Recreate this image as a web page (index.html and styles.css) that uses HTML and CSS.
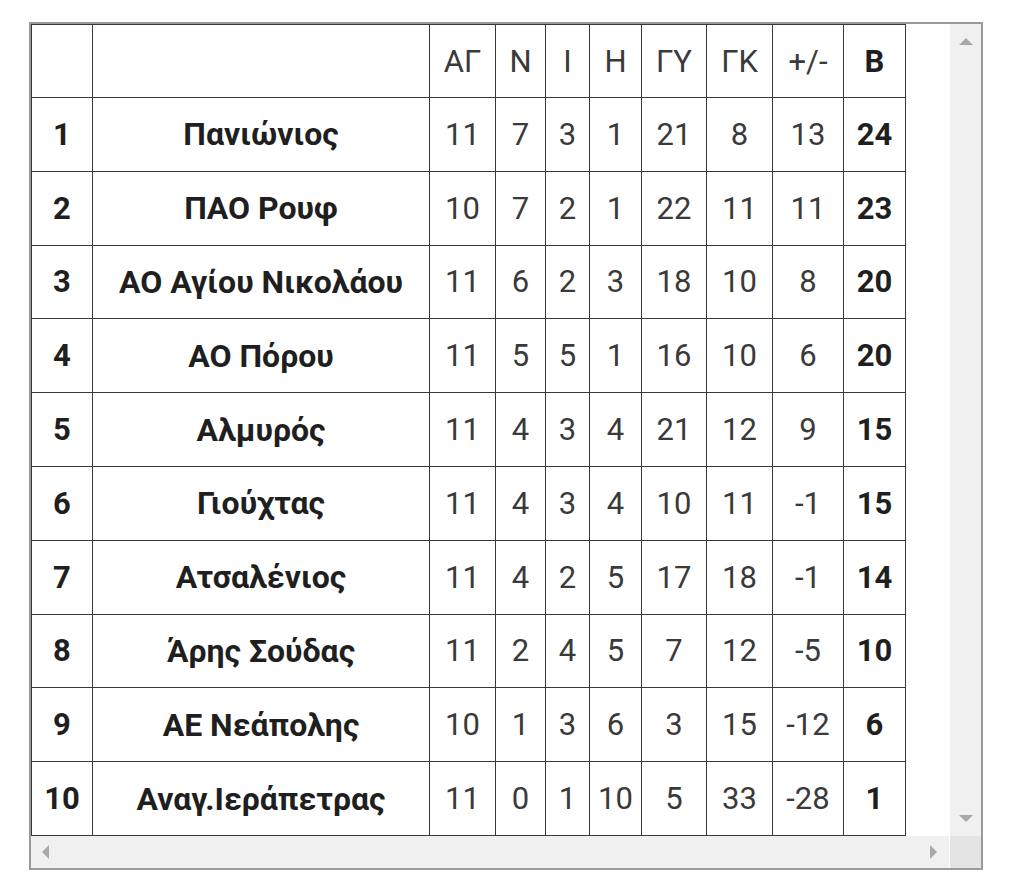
FILE: index.html
```html
<!DOCTYPE html>
<html lang="el">
<head>
<meta charset="utf-8">
<title>Βαθμολογία</title>
<link rel="stylesheet" href="styles.css">
</head>
<body>
<div class="frame">
  <div class="viewport">
    <table class="standings">
      <colgroup>
        <col class="c-pos"><col class="c-team"><col class="c-ag"><col class="c-n"><col class="c-i"><col class="c-h"><col class="c-gy"><col class="c-gk"><col class="c-diff"><col class="c-pts">
      </colgroup>
      <thead>
        <tr><th></th><th></th><th>ΑΓ</th><th>Ν</th><th>Ι</th><th>Η</th><th>ΓΥ</th><th>ΓΚ</th><th>+/-</th><th class="b">Β</th></tr>
      </thead>
      <tbody>
        <tr><td class="b">1</td><td class="b team">Πανιώνιος</td><td>11</td><td>7</td><td>3</td><td>1</td><td>21</td><td>8</td><td>13</td><td class="b">24</td></tr>
        <tr><td class="b">2</td><td class="b team">ΠΑΟ Ρουφ</td><td>10</td><td>7</td><td>2</td><td>1</td><td>22</td><td>11</td><td>11</td><td class="b">23</td></tr>
        <tr><td class="b">3</td><td class="b team">ΑΟ Αγίου Νικολάου</td><td>11</td><td>6</td><td>2</td><td>3</td><td>18</td><td>10</td><td>8</td><td class="b">20</td></tr>
        <tr><td class="b">4</td><td class="b team">ΑΟ Πόρου</td><td>11</td><td>5</td><td>5</td><td>1</td><td>16</td><td>10</td><td>6</td><td class="b">20</td></tr>
        <tr><td class="b">5</td><td class="b team">Αλμυρός</td><td>11</td><td>4</td><td>3</td><td>4</td><td>21</td><td>12</td><td>9</td><td class="b">15</td></tr>
        <tr><td class="b">6</td><td class="b team">Γιούχτας</td><td>11</td><td>4</td><td>3</td><td>4</td><td>10</td><td>11</td><td>-1</td><td class="b">15</td></tr>
        <tr><td class="b">7</td><td class="b team">Ατσαλένιος</td><td>11</td><td>4</td><td>2</td><td>5</td><td>17</td><td>18</td><td>-1</td><td class="b">14</td></tr>
        <tr><td class="b">8</td><td class="b team">Άρης Σούδας</td><td>11</td><td>2</td><td>4</td><td>5</td><td>7</td><td>12</td><td>-5</td><td class="b">10</td></tr>
        <tr><td class="b">9</td><td class="b team">ΑΕ Νεάπολης</td><td>10</td><td>1</td><td>3</td><td>6</td><td>3</td><td>15</td><td>-12</td><td class="b">6</td></tr>
        <tr><td class="b">10</td><td class="b team">Αναγ.Ιεράπετρας</td><td>11</td><td>0</td><td>1</td><td>10</td><td>5</td><td>33</td><td>-28</td><td class="b">1</td></tr>
      </tbody>
    </table>
  </div>
  <div class="vbar">
    <svg class="arrow" width="16" height="10" viewBox="0 0 16 10"><path d="M1 9 L8 2 L15 9 Z" fill="#a8a8a8"/></svg>
    <svg class="arrow" width="16" height="10" viewBox="0 0 16 10"><path d="M1 1 L8 8 L15 1 Z" fill="#a8a8a8"/></svg>
  </div>
  <div class="hbar">
    <svg class="arrow" width="10" height="16" viewBox="0 0 10 16"><path d="M9 1 L2 8 L9 15 Z" fill="#a8a8a8"/></svg>
    <svg class="arrow" width="10" height="16" viewBox="0 0 10 16"><path d="M1 1 L8 8 L1 15 Z" fill="#a8a8a8"/></svg>
  </div>
  <div class="corner"></div>
</div>
</body>
</html>
```
FILE: styles.css
```css
html, body {
  margin: 0;
  padding: 0;
  background: #ffffff;
}

body {
  padding: 22px 0 0 29px;
  font-family: Roboto, "Noto Sans", sans-serif;
}

.frame {
  width: 950px;
  height: 844px;
  border: 2px solid #9a9a9a;
  display: grid;
  grid-template-columns: 1fr 32px;
  grid-template-rows: 1fr 32px;
  background: #ffffff;
}

.viewport {
  overflow: hidden;
}

.standings {
  border-collapse: collapse;
  table-layout: fixed;
  width: 874px;
  height: 812px;
  margin: 0;
  border: 1px solid #383838;
}

.c-pos { width: 61px; }
.c-team { width: 337px; }
.c-ag { width: 66px; }
.c-n { width: 50px; }
.c-i { width: 44px; }
.c-h { width: 52px; }
.c-gy { width: 65px; }
.c-gk { width: 66px; }
.c-diff { width: 71px; }
.c-pts { width: 62px; }

.standings th,
.standings td {
  border: 1px solid #383838;
  text-align: center;
  vertical-align: middle;
  padding: 0;
  font-size: 31px;
  font-weight: 400;
  color: #3a3a3a;
  white-space: nowrap;
  height: 72px;
}

.standings .b {
  font-weight: 700;
  color: #1f1f1f;
}

.standings .team {
  font-size: 32px;
}

.vbar {
  background: #f0f0f0;
  display: flex;
  flex-direction: column;
  justify-content: space-between;
  align-items: center;
  padding: 12px 0 12px;
  margin-left: 1px;
}

.hbar {
  background: #f0f0f0;
  display: flex;
  justify-content: space-between;
  align-items: center;
  padding: 0 10px 0 9px;
}

.corner {
  background: #e4e4e4;
  margin-left: 1px;
}

.arrow {
  display: block;
}
```
